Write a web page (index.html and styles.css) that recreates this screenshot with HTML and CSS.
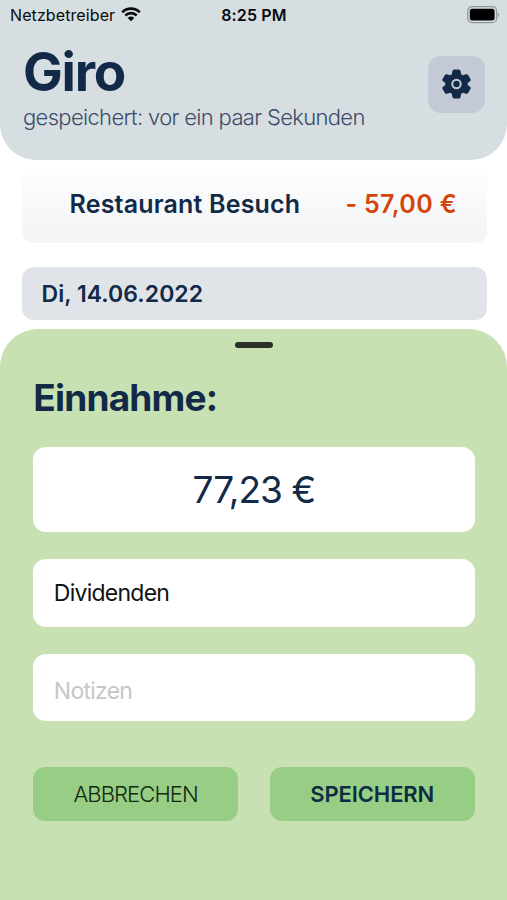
FILE: index.html
```html
<!DOCTYPE html>
<html lang="de">
<head>
<meta charset="utf-8">
<meta name="viewport" content="width=device-width, initial-scale=1">
<title>Giro</title>
<link rel="stylesheet" href="styles.css">
</head>
<body>
<div class="app">
  <header class="header">
    <div class="status">
      <div class="carrier"><span class="carrier-name">Netzbetreiber</span>
        <svg class="wifi" viewBox="0 0 20 15"><path d="M1.2 5.300a12.400 12.400 0 0 1 17.600 0M4.300 8.500a8 8 0 0 1 11.400 0" fill="none" stroke="#080b0d" stroke-width="2.600"/><path d="M6.700 10.900a4.700 4.700 0 0 1 6.600 0L10 14.300z" fill="#080b0d"/></svg>
      </div>
      <span class="clock">8:25 PM</span>
      <svg class="battery" viewBox="0 0 34 18"><rect x=".7" y=".7" width="29" height="16" rx="4.500" fill="none" stroke="#8f9496" stroke-width="1.200"/><rect x="2.800" y="2.800" width="24.800" height="11.600" rx="2.500" fill="#000"/><path d="M31.200 6.200q2.200 2.500 0 5z" fill="#8f9496"/></svg>
    </div>
    <div class="heading">
      <div>
        <h1 class="title">Giro</h1>
        <p class="saved">gespeichert: vor ein paar Sekunden</p>
      </div>
      <button class="settings" aria-label="Einstellungen">
        <svg class="gear" viewBox="2 2 20 20"><path fill="#122a48" d="M9.200 3.100Q9.400 2 10.400 2h3.200q1 0 1.200 1.100l.4 2.100 1.300.8 2-.7q1-.3 1.500.5l1.600 2.800q.5.9-.3 1.500L19.700 11.300v1.400l1.600 1.200q.8.6.3 1.500L20 18.200q-.5.8-1.500.5l-2-.7-1.300.8-.4 2.100Q14.600 22 13.600 22h-3.200q-1 0-1.200-1.100l-.4-2.100-1.300-.8-2 .7q-1 .3-1.500-.5l-1.600-2.800q-.5-.9.3-1.500l1.600-1.200v-1.400l-1.600-1.200q-.8-.6-.3-1.500L4 5.800q.5-.8 1.500-.5l2 .7 1.300-.8z"/><circle cx="12" cy="12" r="2.900" fill="#122a48" stroke="#c4cad5" stroke-width="1.400"/></svg>
      </button>
    </div>
  </header>
  <main class="bookings">
    <div class="booking"><span class="booking-name">Restaurant Besuch</span><span class="amount">- 57,00 €</span></div>
    <div class="day"><span>Di, 14.06.2022</span></div>
  </main>
  <section class="sheet">
    <div class="handle"></div>
    <h2 class="sheet-title"><span>Einnahme:</span></h2>
    <div class="field sum"><span>77,23 €</span></div>
    <div class="field category"><span>Dividenden</span></div>
    <div class="field notes"><span>Notizen</span></div>
    <div class="actions">
      <button class="action cancel"><span>ABBRECHEN</span></button>
      <button class="action save"><span>SPEICHERN</span></button>
    </div>
  </section>
</div>
</body>
</html>
```

FILE: styles.css
```css
* { box-sizing: border-box; margin: 0; padding: 0; }
body { background: #fff; color: #122a48; font-family: Inter, "Liberation Sans", sans-serif; }
button { border: 0; font-family: inherit; }
.app { display: flex; flex-direction: column; width: 507px; height: 900px; overflow: hidden; white-space: nowrap; }
.header { height: 160px; background: #d7dee2; border-radius: 0 0 36px 36px; }
.status { display: grid; grid-template-columns: 1fr auto 1fr; align-items: center; height: 30px; padding: 0 7px 0 10px; color: #080b0d; font-size: 16px; }
.carrier { display: flex; align-items: center; gap: 6px; letter-spacing: 0.1px; }
.wifi { width: 20px; height: 15px; margin-top: -1px; }
.clock { margin-right: 2px; font-weight: 600; letter-spacing: 0.15px; }
.battery { width: 34px; height: 18px; justify-self: end; margin-right: -0.5px; margin-bottom: 1px; }
.heading { display: flex; justify-content: space-between; padding: 13px 21.600px 0 23px; }
.title { font-size: 53px; font-weight: 700; line-height: 58px; letter-spacing: -1.2px; }
.saved { color: #3c4d68; font-size: 22px; font-weight: 300; line-height: 32px; letter-spacing: -0.67px; }
.settings { display: flex; align-items: center; justify-content: center; width: 57px; height: 57px; margin-top: 13px; border-radius: 13px; background: #c4cad5; }
.gear { width: 29px; height: 30px; margin-bottom: 2px; }
.bookings { display: flex; flex-direction: column; gap: 23.500px; height: 168.500px; padding: 8px 20px 0 21.500px; }
.booking { display: flex; align-items: center; justify-content: space-between; height: 75px; padding: 0 30px 4px 48px; border-radius: 10px; background: linear-gradient(#fefefe, #f5f6f8 70%, #f4f5f7); font-size: 25px; font-weight: 600; }
.booking-name { letter-spacing: 0.18px; }
.amount { color: #d4450c; letter-spacing: 0.35px; }
.day { display: flex; align-items: center; height: 53.500px; padding: 1px 0 0 20px; border-radius: 12px; background: #e0e4e9; font-size: 23px; font-weight: 600; letter-spacing: 0.05px; }
.sheet { flex: 1; padding: 13px 32.500px 0 33.300px; border-radius: 38px 38px 0 0; background: #c8e1b3; }
.handle { width: 38px; height: 6px; margin: 0 auto; border-radius: 3px; background: #2c3029; }
.sheet-title { margin: 27px 0 26px; font-size: 37px; line-height: 46px; font-weight: 700; letter-spacing: -0.8px; }
.field { display: flex; align-items: center; height: 67.500px; margin-bottom: 27px; padding-left: 20.500px; border-radius: 13px; background: #fff; font-size: 23px; letter-spacing: -0.75px; }
.sum { height: 85.500px; padding: 0; justify-content: center; font-size: 37px; font-weight: 400; letter-spacing: -0.9px; }
.category { color: #111; }
.notes { padding-top: 7px; color: #c6c6ca; }
.actions { display: flex; gap: 32px; margin-top: 45.500px; }
.action { flex: 1; height: 54px; border-radius: 12px; background: #97cd84; color: #11290f; font-size: 22px; }
.cancel { font-weight: 300; letter-spacing: -0.9px; }
.save { color: #0c2d42; font-weight: 600; letter-spacing: -0.1px; }
```
